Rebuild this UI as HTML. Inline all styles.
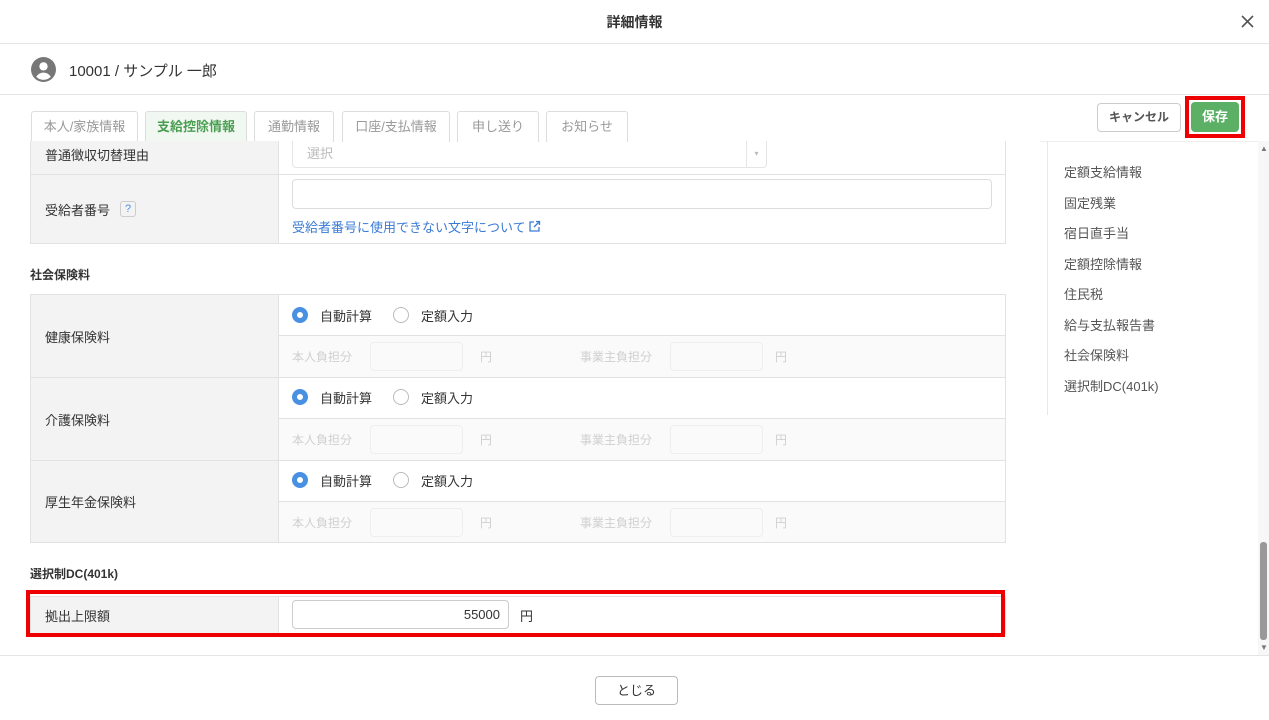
<!DOCTYPE html>
<html><head><meta charset="utf-8"><style>
*{box-sizing:border-box;margin:0;padding:0}
body{width:1269px;height:720px;overflow:hidden;background:#fff;font-family:"Liberation Sans","Noto Sans CJK JP",sans-serif;color:#333;position:relative;font-size:13px}
.a{position:absolute}
.tab{position:absolute;top:111px;height:31px;border:1px solid #ddd;border-bottom:none;border-radius:3px 3px 0 0;color:#999;font-size:13px;text-align:center;line-height:30px;background:#fff}
.lbl{position:absolute;left:30px;width:248px;background:#f3f3f3;border-bottom:1px solid #e2e2e2;border-left:1px solid #e2e2e2;font-size:13px;padding-left:14px;display:flex;align-items:center}
.val{position:absolute;left:278px;width:728px;border-bottom:1px solid #e2e2e2;border-right:1px solid #e2e2e2;border-left:1px solid #e2e2e2}
.sub{position:absolute;left:278px;width:728px;background:#fafafa;border-right:1px solid #e2e2e2;border-bottom:1px solid #e2e2e2;border-left:1px solid #e2e2e2;color:#d0d0d0;font-size:12px}
.rad{position:absolute;width:16px;height:16px;border-radius:50%}
.on{border:5px solid #4a90e2;background:#fff}
.off{border:1px solid #bbb;background:#fff}
.nav{position:absolute;left:1064px;font-size:13px;color:#555}
</style></head><body>
<div class="a" style="left:0;top:0;width:1269px;height:44px;border-bottom:1px solid #e5e5e5;text-align:center;line-height:44px;font-size:14px;font-weight:bold">詳細情報</div>
<svg class="a" style="left:1241px;top:15px" width="13" height="13"><path d="M1 1L12 12M12 1L1 12" stroke="#555" stroke-width="1.6"/></svg>
<svg class="a" style="left:31px;top:57px" width="25" height="25" viewBox="0 0 24 24"><circle cx="12" cy="12" r="12" fill="#777"/><circle cx="12" cy="9" r="4" fill="#fff"/><path d="M5 19c2-3 4.5-4 7-4s5 1 7 4c-2 2-4.5 3-7 3s-5-1-7-3z" fill="#fff"/></svg>
<div class="a" style="left:69px;top:60px;font-size:15px;color:#333">10001 / サンプル 一郎</div>
<div class="a" style="left:0;top:94px;width:1269px;border-top:1px solid #e5e5e5"></div>
<div class="tab" style="left:31px;width:107px">本人/家族情報</div>
<div class="tab" style="left:145px;width:102px;background:#f1f8f1;color:#4a9e52;font-weight:bold">支給控除情報</div>
<div class="tab" style="left:254px;width:80px">通勤情報</div>
<div class="tab" style="left:342px;width:108px">口座/支払情報</div>
<div class="tab" style="left:457px;width:82px">申し送り</div>
<div class="tab" style="left:546px;width:82px">お知らせ</div>
<div class="a" style="left:1097px;top:103px;width:84px;height:29px;border:1px solid #ccc;border-radius:4px;text-align:center;line-height:27px;font-size:12px;font-weight:bold;color:#555">キャンセル</div>
<div class="a" style="left:1185px;top:96px;width:60px;height:42px;border:4px solid #e00"></div>
<div class="a" style="left:1191px;top:102px;width:48px;height:30px;background:#5cb065;border-radius:4px;color:#fff;text-align:center;line-height:30px;font-size:13px;font-weight:bold">保存</div>
<div class="a" style="left:1040px;top:141px;width:229px;border-top:1px solid #eee"></div>

<div class="lbl" style="top:141px;height:34px;padding-bottom:7px">普通徴収切替理由</div>
<div class="val" style="top:141px;height:34px"><div class="a" style="left:13px;top:0;width:475px;height:27px;border:1px solid #e5e5e5;border-top:none;border-radius:0 0 4px 4px;color:#bbb;padding-left:14px;line-height:26px">選択<span class="a" style="right:0;top:0;width:20px;height:26px;border-left:1px solid #e5e5e5;font-size:8px;text-align:center;color:#bbb">▾</span></div></div>
<div class="lbl" style="top:175px;height:69px">受給者番号<span style="display:inline-block;margin-left:10px;width:16px;height:16px;border:1px solid #ccc;border-radius:3px;color:#4a90e2;font-size:11px;text-align:center;line-height:14px">?</span></div>
<div class="val" style="top:175px;height:69px"><div class="a" style="left:13px;top:4px;width:700px;height:30px;border:1px solid #ddd;border-radius:4px"></div><div class="a" style="left:13px;top:42px;color:#3a7bd5;font-size:13px">受給者番号に使用できない文字について<svg width="13" height="13" style="vertical-align:-1px;margin-left:2px"><path d="M6 2H2v9h9V7M8 1.5h3.5V5M11.5 1.5L6 7" stroke="#3a7bd5" stroke-width="1.3" fill="none"/></svg></div></div>

<div class="a" style="left:30px;top:266px;font-size:12px;font-weight:bold">社会保険料</div>
<div class="a" style="left:30px;top:294px;width:976px;border-top:1px solid #e2e2e2"></div>

<div class="lbl" style="top:295px;height:83px">健康保険料</div>
<div class="val" style="top:295px;height:41px"><div class="rad on" style="left:13px;top:12px"></div><span class="a" style="left:41px;top:11px">自動計算</span><div class="rad off" style="left:114px;top:12px"></div><span class="a" style="left:142px;top:11px">定額入力</span></div>
<div class="sub" style="top:336px;height:42px"><span class="a" style="left:13px;top:12px">本人負担分</span><div class="a" style="left:91px;top:6px;width:93px;height:29px;border:1px solid #eee;border-radius:4px;background:#fafafa"></div><span class="a" style="left:201px;top:12px">円</span><span class="a" style="left:301px;top:12px">事業主負担分</span><div class="a" style="left:391px;top:6px;width:93px;height:29px;border:1px solid #eee;border-radius:4px"></div><span class="a" style="left:496px;top:12px">円</span></div>

<div class="lbl" style="top:378px;height:83px">介護保険料</div>
<div class="val" style="top:378px;height:41px"><div class="rad on" style="left:13px;top:11px"></div><span class="a" style="left:41px;top:10px">自動計算</span><div class="rad off" style="left:114px;top:11px"></div><span class="a" style="left:142px;top:10px">定額入力</span></div>
<div class="sub" style="top:419px;height:42px"><span class="a" style="left:13px;top:12px">本人負担分</span><div class="a" style="left:91px;top:6px;width:93px;height:29px;border:1px solid #eee;border-radius:4px"></div><span class="a" style="left:201px;top:12px">円</span><span class="a" style="left:301px;top:12px">事業主負担分</span><div class="a" style="left:391px;top:6px;width:93px;height:29px;border:1px solid #eee;border-radius:4px"></div><span class="a" style="left:496px;top:12px">円</span></div>

<div class="lbl" style="top:461px;height:82px">厚生年金保険料</div>
<div class="val" style="top:461px;height:41px"><div class="rad on" style="left:13px;top:11px"></div><span class="a" style="left:41px;top:10px">自動計算</span><div class="rad off" style="left:114px;top:11px"></div><span class="a" style="left:142px;top:10px">定額入力</span></div>
<div class="sub" style="top:502px;height:41px"><span class="a" style="left:13px;top:12px">本人負担分</span><div class="a" style="left:91px;top:6px;width:93px;height:29px;border:1px solid #eee;border-radius:4px"></div><span class="a" style="left:201px;top:12px">円</span><span class="a" style="left:301px;top:12px">事業主負担分</span><div class="a" style="left:391px;top:6px;width:93px;height:29px;border:1px solid #eee;border-radius:4px"></div><span class="a" style="left:496px;top:12px">円</span></div>

<div class="a" style="left:30px;top:565px;font-size:12px;font-weight:bold">選択制DC(401k)</div>
<div class="lbl" style="top:596px;height:38px;border-top:1px solid #e2e2e2">拠出上限額</div>
<div class="val" style="top:596px;height:38px;border-top:1px solid #e2e2e2"><div class="a" style="left:13px;top:3px;width:217px;height:29px;border:1px solid #ccc;border-radius:4px;text-align:right;padding-right:8px;line-height:27px;font-size:13px">55000</div><span class="a" style="left:241px;top:9px">円</span></div>
<div class="a" style="left:26px;top:590px;width:979px;height:47px;border:4px solid #e00"></div>

<div class="a" style="left:1047px;top:141px;height:274px;border-left:1px solid #e8e8e8"></div>
<div class="nav" style="top:162px">定額支給情報</div>
<div class="nav" style="top:193px">固定残業</div>
<div class="nav" style="top:223px">宿日直手当</div>
<div class="nav" style="top:254px">定額控除情報</div>
<div class="nav" style="top:284px">住民税</div>
<div class="nav" style="top:315px">給与支払報告書</div>
<div class="nav" style="top:345px">社会保険料</div>
<div class="nav" style="top:376px">選択制DC(401k)</div>

<div class="a" style="left:1258px;top:141px;width:11px;height:514px;background:#f7f7f7"></div>
<div class="a" style="left:1260px;top:144px;font-size:8px;color:#777">▲</div>
<div class="a" style="left:1260px;top:542px;width:7px;height:98px;background:#999;border-radius:3px"></div>
<div class="a" style="left:1260px;top:643px;font-size:8px;color:#777">▼</div>

<div class="a" style="left:0;top:655px;width:1269px;border-top:1px solid #e5e5e5"></div>
<div class="a" style="left:595px;top:676px;width:83px;height:29px;border:1px solid #bbb;border-radius:4px;text-align:center;line-height:27px;font-size:13px">とじる</div>
</body></html>
